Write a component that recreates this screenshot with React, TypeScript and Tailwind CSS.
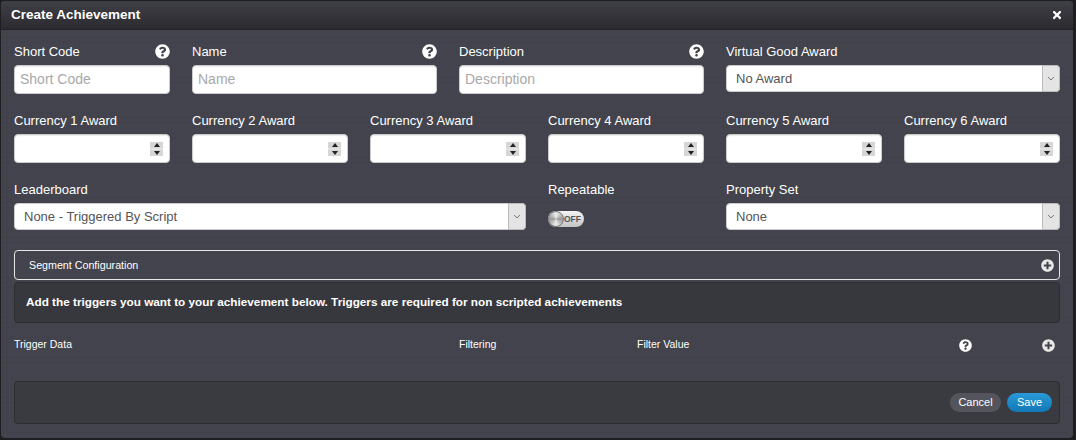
import React from 'react';
import { FaPlusCircle, FaQuestionCircle, FaTimes } from 'react-icons/fa';

const inputClass =
  'h-[29px] w-full rounded-[4px] bg-white pl-[5px] pb-[1px] text-[14px] text-[#555] shadow-[inset_0_1px_1px_rgba(0,0,0,0.08)] outline-none placeholder:text-[#a9a9a9] border border-[#ccc]';

const Field: React.FC<{ label: string; help?: boolean; children: React.ReactNode }> = ({ label, help, children }) => (
  <div>
    <div className="mb-[5px] flex h-[17px] items-center justify-between text-[13px] leading-[17px] text-white">
      <span>{label}</span>
      {help && <FaQuestionCircle className="h-[15px] w-[15px] text-white" />}
    </div>
    {children}
  </div>
);

const TextField: React.FC<{ label: string }> = ({ label }) => (
  <Field label={label} help>
    <input type="text" placeholder={label} className={inputClass} />
  </Field>
);

const NumberField: React.FC<{ label: string }> = ({ label }) => (
  <Field label={label}>
    <div className="relative">
      <input type="text" className={inputClass} />
      <div className="absolute right-[7px] top-[8px] flex h-[14px] w-[13px] flex-col justify-between bg-[#e2e2e2]">
        <div className="flex h-[6px] items-center justify-center bg-[#d6d6d6]">
          <div className="h-0 w-0 border-x-[3px] border-b-[4px] border-x-transparent border-b-[#222]" />
        </div>
        <div className="flex h-[6px] items-center justify-center bg-[#d6d6d6]">
          <div className="h-0 w-0 border-x-[3px] border-t-[4px] border-x-transparent border-t-[#222]" />
        </div>
      </div>
    </div>
  </Field>
);

const SelectField: React.FC<{ label: string; value: string }> = ({ label, value }) => (
  <Field label={label}>
    <div className="relative">
      <select className="h-[27px] w-full appearance-none rounded-[4px] border border-[#ccc] bg-white pl-[9px] text-[13px] text-[#555] outline-none">
        <option>{value}</option>
      </select>
      <div className="absolute inset-y-0 right-0 flex w-[18px] items-center justify-center rounded-r-[4px] border border-[#bbb] bg-[#e4e4e4]">
        <svg width="8" height="5" viewBox="0 0 8 5" fill="none" stroke="#777" strokeWidth="1">
          <path d="M1 1l3 3 3-3" />
        </svg>
      </div>
    </div>
  </Field>
);

const App: React.FC = () => (
  <div className="h-[440px] w-[1076px] overflow-hidden bg-[#1e1e20] pl-[1px] pt-[1px] font-['Liberation_Sans',Arial,sans-serif]">
    <div className="flex h-[437px] w-[1072px] flex-col overflow-hidden rounded-[4px] bg-[#42434c] bg-[repeating-linear-gradient(90deg,rgba(255,255,255,0.012)_0px,rgba(255,255,255,0.012)_1px,transparent_1px,transparent_4px),repeating-linear-gradient(0deg,rgba(0,0,0,0.025)_0px,rgba(0,0,0,0.025)_1px,transparent_1px,transparent_5px)]">
      <div className="flex h-[29px] shrink-0 items-center justify-between border-b border-[#222226] bg-gradient-to-b from-[#3f3f46] to-[#2b2b30] pl-[10px] pr-[10px]">
        <span className="text-[13.5px] font-bold text-white">Create Achievement</span>
        <FaTimes className="h-[12px] w-[12px] text-white" />
      </div>

      <div className="flex flex-1 flex-col pl-[13px] pr-[13px] pt-[13px]">
        <div className="grid grid-cols-[156px_245px_245px_334px] gap-x-[22px]">
          <TextField label="Short Code" />
          <TextField label="Name" />
          <TextField label="Description" />
          <SelectField label="Virtual Good Award" value="No Award" />
        </div>

        <div className="mt-[18px] grid grid-cols-6 gap-x-[22px]">
          {[1, 2, 3, 4, 5, 6].map(n => (
            <NumberField key={n} label={`Currency ${n} Award`} />
          ))}
        </div>

        <div className="mt-[18px] grid grid-cols-[512px_156px_334px] gap-x-[22px]">
          <SelectField label="Leaderboard" value="None - Triggered By Script" />
          <Field label="Repeatable">
            <div className="relative mt-[13px] flex h-[16px] w-[36px] items-center justify-end rounded-full bg-gradient-to-b from-[#f4f4f4] to-[#c4c4c4] pr-[3px] text-[8.5px] font-bold text-[#555]">
              <div className="absolute left-0 top-0 h-[16px] w-[16px] rounded-full border border-[#777] bg-[conic-gradient(#eee,#999,#eee,#999,#eee)]" />
              OFF
            </div>
          </Field>
          <SelectField label="Property Set" value="None" />
        </div>

        <div className="mt-[20px] flex h-[30px] items-center justify-between rounded-[4px] border border-[#e6e6e6] pl-[14px] pr-[5px] text-[10.7px] text-white">
          <span>Segment Configuration</span>
          <FaPlusCircle className="h-[13px] w-[13px] text-[#e8e8e8]" />
        </div>

        <div className="mt-[2px] flex h-[41px] items-center rounded-[4px] border border-[#2c2d31] bg-[#37383d] pb-[2px] pl-[11px] text-[11.75px] font-bold text-white">
          Add the triggers you want to your achievement below. Triggers are required for non scripted achievements
        </div>

        <div className="mt-[15px] flex h-[14px] items-center text-[10.5px] text-white">
          <span className="w-[445px]">Trigger Data</span>
          <span className="w-[178px]">Filtering</span>
          <span className="w-[322px]">Filter Value</span>
          <FaQuestionCircle className="h-[13px] w-[13px]" />
          <FaPlusCircle className="ml-[70px] mt-[1px] h-[13px] w-[13px] text-[#e8e8e8]" />
        </div>

        <div className="mt-[29px] flex h-[43px] items-center justify-end gap-[6px] rounded-[4px] border border-[#2c2d31] bg-[#3a3b40] pr-[7px]">
          <button className="h-[19px] w-[51px] rounded-full bg-[#54555c] text-[11px] text-white">Cancel</button>
          <button className="h-[19px] w-[45px] rounded-full bg-gradient-to-b from-[#2a9ad8] to-[#1177b5] text-[11px] text-white">Save</button>
        </div>
      </div>
    </div>
  </div>
);

export default App;
